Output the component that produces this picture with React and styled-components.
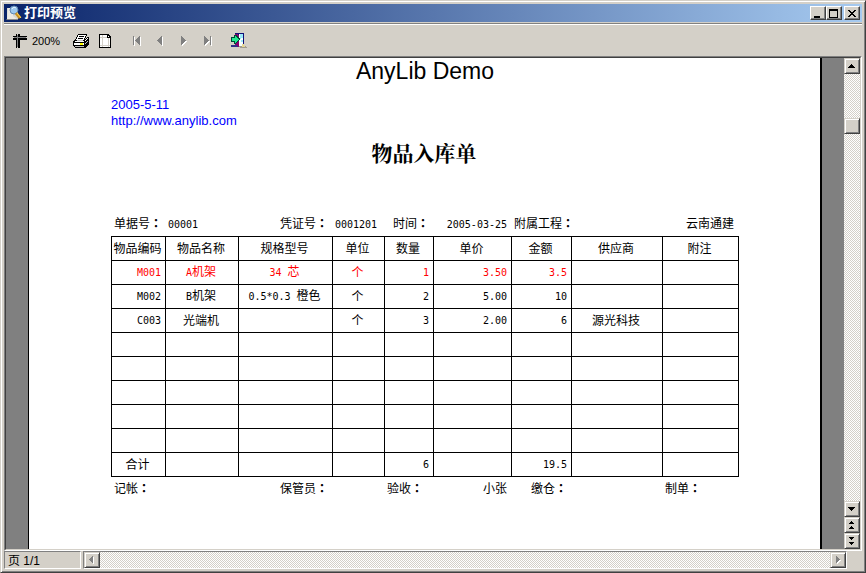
import React from 'react';
import styled, { createGlobalStyle } from 'styled-components';

const GlobalStyle = createGlobalStyle`
  * {
    box-sizing: border-box;
  }

  body {
    margin: 0;
    background: #d4d0c8;
    font-family: 'Liberation Sans', 'Noto Sans CJK SC', sans-serif;
    font-size: 12px;
    color: #000000;
  }

  button {
    margin: 0;
    padding: 0;
    border: none;
    background: transparent;
    color: inherit;
    font: inherit;
  }

  svg {
    display: block;
    flex-shrink: 0;
  }
`;

const Window = styled.div`
  display: flex;
  flex-direction: column;
  height: 100vh;
  padding: 3px;
  background: #d4d0c8;
  border: 1px solid;
  border-color: #d4d0c8 #404040 #404040 #d4d0c8;
  box-shadow: inset 1px 1px #ffffff, inset -1px -1px #808080;
`;

const TitleBar = styled.header`
  display: flex;
  align-items: center;
  height: 18px;
  flex-shrink: 0;
  padding: 0 2px;
  background: linear-gradient(to right, #0a246a, #a6caf0);
`;

const TitleText = styled.h1`
  flex: 1;
  margin: 0 0 0 2px;
  color: #ffffff;
  font-size: 13px;
  line-height: 18px;
  font-weight: 700;
`;

const WindowButton = styled.button`
  display: flex;
  align-items: center;
  justify-content: center;
  width: 16px;
  height: 14px;
  margin-left: ${(props) => (props.$spaced ? '2px' : '0')};
  background: #d4d0c8;
  border: 1px solid;
  border-color: #ffffff #404040 #404040 #ffffff;
  box-shadow: inset -1px -1px #808080;
`;

const Toolbar = styled.div`
  display: flex;
  align-items: center;
  gap: 12px;
  height: 33px;
  flex-shrink: 0;
  margin-top: 1px;
  padding: 1px 8px 0;
  border-top: 1px solid #808080;
  box-shadow: inset 0 1px #ffffff;
`;

const ToolGroup = styled.div`
  display: flex;
  align-items: center;
  gap: ${(props) => props.$gap || '0'};
`;

const ToolButton = styled.button`
  display: flex;
  align-items: center;
  justify-content: center;
  gap: 4px;
  min-width: ${(props) => props.$width || 'auto'};
`;

const ZoomLabel = styled.span`
  width: 28px;
  font-size: 11px;
  line-height: 16px;
`;

const Client = styled.main`
  display: flex;
  flex: 1;
  min-height: 0;
  border: 1px solid;
  border-color: #808080 #ffffff #ffffff #808080;
`;

const ClientInner = styled.div`
  display: flex;
  flex: 1;
  min-width: 0;
  border: 1px solid;
  border-color: #404040 #d4d0c8 #d4d0c8 #404040;
`;

const Viewport = styled.div`
  display: flex;
  flex: 1;
  min-width: 0;
  padding: 0 22px;
  background: #808080;
  overflow: hidden;
`;

const Page = styled.article`
  flex: 1;
  min-width: 0;
  padding: 0 81px 0 82px;
  background: #ffffff;
  border-left: 1px solid #000000;
  border-right: 2px solid #000000;
`;

const ReportHeader = styled.h2`
  margin: 0;
  font-family: 'Liberation Sans', sans-serif;
  font-size: 23px;
  line-height: 26px;
  font-weight: 400;
  text-align: center;
`;

const Meta = styled.div`
  margin-top: 13px;
  color: #0000ff;
  font-size: 13px;
  line-height: 16px;
`;

const SiteLink = styled.a`
  display: block;
  color: inherit;
  text-decoration: none;
`;

const ReportTitle = styled.h3`
  margin: 11px 0 48px;
  padding-right: 2px;
  font-family: 'Noto Serif CJK SC', 'Noto Sans CJK SC', serif;
  font-size: 21px;
  line-height: 24px;
  font-weight: 700;
  text-align: center;
`;

const FieldRow = styled.div`
  display: grid;
  grid-template-columns: 54fr 73fr 94fr 52fr 49fr 78fr 60fr 91fr 76fr;
  height: 24px;
  padding-left: 1px;
  line-height: 24px;
`;

const Field = styled.span`
  grid-column: ${(props) => props.$col};
  min-width: 0;
  padding: ${(props) => (props.$right ? '0 5px 0 0' : '0 0 0 2px')};
  text-align: ${(props) => (props.$right ? 'right' : 'left')};
  white-space: nowrap;
`;

const Sheet = styled.table`
  width: 100%;
  table-layout: fixed;
  border-collapse: separate;
  border-spacing: 0;
  border: solid #000000;
  border-width: 1px 0 0 1px;
`;

const Row = styled.tr`
  height: 24px;
  color: ${(props) => (props.$highlight ? '#ff0000' : 'inherit')};
`;

const cell = `
  height: 24px;
  line-height: 20px;
  border: solid #000000;
  border-width: 0 1px 1px 0;
  font-weight: 400;
  white-space: nowrap;
`;

const HeadCell = styled.th`
  ${cell}
  padding: 0 2px 0 0;
`;

const Cell = styled.td`
  ${cell}
  padding: ${(props) => (props.$align === 'right' ? '0 4px 0 0' : '0 2px 0 0')};
  text-align: ${(props) => props.$align};
`;

const Latin = styled.span`
  font-family: 'DejaVu Sans Mono', 'Liberation Mono', monospace;
  font-size: 10px;
`;

const Colon = styled.span`
  font-family: 'Noto Sans CJK JP', sans-serif;
  font-weight: 700;
  line-height: 0;
`;

const ScrollBar = styled.div`
  display: flex;
  flex-direction: ${(props) => (props.$horizontal ? 'row' : 'column')};
  flex: ${(props) => (props.$horizontal ? '1' : '0 0 16px')};
  background: repeating-conic-gradient(#ffffff 0 25%, #d4d0c8 0 50%) 0 0 / 2px 2px;
`;

const ScrollButton = styled.button`
  display: flex;
  align-items: center;
  justify-content: center;
  width: 16px;
  height: 16px;
  flex-shrink: 0;
  background: #d4d0c8;
  border: 1px solid;
  border-color: #d4d0c8 #404040 #404040 #d4d0c8;
  box-shadow: inset 1px 1px #ffffff, inset -1px -1px #808080;
`;

const Track = styled.div`
  flex: ${(props) => props.$grow};
`;

const StatusBar = styled.footer`
  display: flex;
  gap: 2px;
  height: 18px;
  flex-shrink: 0;
  padding-right: 15px;
`;

const StatusPanel = styled.div`
  width: 77px;
  padding: 0 3px;
  line-height: 18px;
  border: 1px solid;
  border-color: #808080 #ffffff #ffffff #808080;
`;

const ScrollFrame = styled.div`
  display: flex;
  flex: 1;
  border: 1px solid;
  border-color: #808080 #ffffff #ffffff #808080;
`;

const PreviewIcon = () => (
  <svg width="16" height="16" viewBox="0 0 16 16">
    <path d="M1 3h8l3 3v8H1z" fill="#d8d8d0" />
    <path d="M1 14l1-11h5v8l4 3z" fill="#eceae4" />
    <path d="M0 14h12v1H1z" fill="#8c8c8c" />
    <circle cx="8" cy="5" r="4" fill="#9cc8ee" stroke="#6088b4" strokeWidth="1" />
    <path d="M6 4c1-2 3-2 4-1" stroke="#e4f4ff" fill="none" />
    <path d="M10 8l4 5" stroke="#c89020" strokeWidth="3" />
    <path d="M11 8l4 5" stroke="#ffd860" strokeWidth="1" />
  </svg>
);

const RulerIcon = () => (
  <svg width="16" height="16" viewBox="0 0 16 16" shapeRendering="crispEdges">
    <path d="M1 3h14v1H1zM1 5h14v2H1zM4 1h1v14H4zM6 1h2v14H6z" fill="#000000" />
    <path d="M2 4h12v1H2zM5 2h1v12H5z" fill="#808080" />
  </svg>
);

const PrinterIcon = () => (
  <svg width="18" height="16" viewBox="0 0 18 16" shapeRendering="crispEdges">
    <path d="M6 1h8l-1 6H3z" fill="#ffffff" />
    <path
      d="M6 1h9v1H6zM5 2h1v2H5zM14 2h1v1h-1zM13 3h1v2h-1zM4 4h1v2H4zM7 3h5v1H7zM6 5h5v1H6zM3 6h1v1H3zM12 5h1v2h-1z"
      fill="#000000"
    />
    <path d="M2 7h10l3-3h1l1 1v6l-4 4H3l-2-2V8z" fill="#000000" />
    <path d="M3 8h9v1H3zM2 10h10v2H2zM13 7h1v1h-1zM14 6h1v1h-1zM15 5h1v1h-1z" fill="#ffffff" />
    <path d="M13 10h1v1h-1zM14 9h1v1h-1zM15 8h1v1h-1zM3 13h9v1H3zM5 7h6v1H5z" fill="#c0c0c0" />
    <path d="M8 10h3v2H8z" fill="#ffff00" />
  </svg>
);

const PageIcon = () => (
  <svg width="16" height="16" viewBox="0 0 16 16" shapeRendering="crispEdges">
    <path d="M1 1h9l3 3v11H1z" fill="#000000" />
    <path d="M2 2h7v3h3v9H2z" fill="#ffffff" />
    <path d="M10 3h1v1h-1z" fill="#ffffff" />
    <path d="M4 2h1v12H4zM2 4h7v1H2zM2 12h10v1H2zM10 5h1v9h-1z" fill="#d4d0c8" />
  </svg>
);

const navShapes = {
  first: 'M1 1h1v9H1zM8 1v9l-5-4v-1z',
  prev: 'M7 1v9l-5-4v-1z',
  next: 'M3 1v9l5-4v-1z',
  last: 'M9 1h1v9H9zM3 1v9l5-4v-1z',
};

const NavIcon = ({ type }) => (
  <svg width="11" height="12" viewBox="0 0 11 12" shapeRendering="crispEdges">
    <path d={navShapes[type]} fill="#ffffff" transform="translate(1 1)" />
    <path d={navShapes[type]} fill="#808080" />
  </svg>
);

const ExitIcon = () => (
  <svg width="18" height="16" viewBox="0 0 18 16" shapeRendering="crispEdges">
    <path d="M5 0h9v13H5z" fill="#101078" />
    <path d="M9 1h4v12H9z" fill="#f4ffff" />
    <path d="M10 1h3v4h-2v1h-1zM11 7h2v2h-2z" fill="#9ce8f8" />
    <path d="M5 1h3l1 2v11l-4-2z" fill="#880070" />
    <path d="M1 4h3V2h2l4 4-4 5H4V9H1z" fill="#004838" />
    <path d="M2 5h3V3l4 3-4 4V8H2z" fill="#20e890" />
    <path d="M1 12h5l3 2H1z" fill="#303088" />
    <path d="M9 13h6l3 2h-8z" fill="#a09c90" />
    <path d="M12 11h2v2h1v1h-3z" fill="#e8d890" />
  </svg>
);

const arrowShapes = {
  up: 'M4 3h1v1H4zM3 4h3v1H3zM2 5h5v1H2zM1 6h7v1H1z',
  down: 'M1 3h7v1H1zM2 4h5v1H2zM3 5h3v1H3zM4 6h1v1H4z',
  left: 'M5 1h1v7H5zM4 2h1v5H4zM3 3h1v3H3zM2 4h1v1H2z',
  right: 'M3 1h1v7H3zM4 2h1v5H4zM5 3h1v3H5zM6 4h1v1H6z',
  pageUp: 'M4 1h1v1H4zM3 2h3v1H3zM2 3h5v1H2zM4 6h1v1H4zM3 7h3v1H3zM2 8h5v1H2z',
  pageDown: 'M2 1h5v1H2zM3 2h3v1H3zM4 3h1v1H4zM2 6h5v1H2zM3 7h3v1H3zM4 8h1v1H4z',
};

const Arrow = ({ type, disabled }) => (
  <svg width="10" height="10" viewBox="0 0 10 10" shapeRendering="crispEdges">
    {disabled && <path d={arrowShapes[type]} fill="#ffffff" transform="translate(1 1)" />}
    <path d={arrowShapes[type]} fill={disabled ? '#808080' : '#000000'} />
  </svg>
);

const windowShapes = {
  min: 'M1 7h6v2H1z',
  max: 'M0 0h9v9H0zM1 2v6h7V2z',
  close: 'M1 1h2v1h1v1h2V2h1V1h2v1H8v1H7v1H6v1h1v1h1v1h1v1H7V7H6V6H4v1H3v1H1V7h1V6h1V5h1V4H3V3H2V2H1z',
};

const WindowIcon = ({ type }) => (
  <svg width="10" height="9" viewBox="0 0 10 9" shapeRendering="crispEdges">
    <path d={windowShapes[type]} fill="#000000" fillRule="evenodd" />
  </svg>
);

const columns = [
  { key: 'code', title: '物品编码', width: 54, align: 'right' },
  { key: 'name', title: '物品名称', width: 73, align: 'center' },
  { key: 'spec', title: '规格型号', width: 94, align: 'center' },
  { key: 'unit', title: '单位', width: 52, align: 'center' },
  { key: 'count', title: '数量', width: 49, align: 'right' },
  { key: 'price', title: '单价', width: 78, align: 'right' },
  { key: 'amount', title: '金额', width: 60, align: 'right' },
  { key: 'supplier', title: '供应商', width: 91, align: 'center' },
  { key: 'note', title: '附注', width: 76, align: 'center' },
];

const items = [
  { code: 'M001', name: 'A机架', spec: '34 芯', unit: '个', count: '1', price: '3.50', amount: '3.5' },
  { code: 'M002', name: 'B机架', spec: '0.5*0.3 橙色', unit: '个', count: '2', price: '5.00', amount: '10' },
  { code: 'C003', name: '光端机', unit: '个', count: '3', price: '2.00', amount: '6', supplier: '源光科技' },
  {},
  {},
  {},
  {},
  {},
];

const total = { count: '6', amount: '19.5' };

const headFields = [
  { col: 1, text: '单据号：' },
  { col: 2, text: '00001' },
  { col: 3, text: '凭证号：', right: true },
  { col: 4, text: '0001201' },
  { col: 5, text: '时间：', right: true },
  { col: 6, text: '2005-03-25', right: true },
  { col: 7, text: '附属工程：' },
  { col: 9, text: '云南通建', right: true },
];

const footFields = [
  { col: 1, text: '记帐：' },
  { col: 3, text: '保管员：', right: true },
  { col: 5, text: '验收：' },
  { col: 6, text: '小张', right: true },
  { col: 7, text: '缴仓：', right: true },
  { col: 9, text: '制单：' },
];

// half-width runs get the monospaced face, full-width colons the centred one
const MixedText = ({ text = '' }) =>
  text
    .split(/([\x20-\x7e]+|：)/)
    .filter(Boolean)
    .map((part, i) => {
      if (part === '：') return <Colon key={i}>{part}</Colon>;
      return /^[\x20-\x7e]/.test(part) ? <Latin key={i}>{part}</Latin> : part;
    });

const Fields = ({ fields }) => (
  <FieldRow>
    {fields.map((field) => (
      <Field key={field.text} $col={field.col} $right={field.right}>
        <MixedText text={field.text} />
      </Field>
    ))}
  </FieldRow>
);

const ReportTable = () => (
  <Sheet>
    <colgroup>
      {columns.map((column) => (
        <col key={column.key} width={column.width} />
      ))}
    </colgroup>
    <thead>
      <Row>
        {columns.map((column) => (
          <HeadCell key={column.key} scope="col">
            {column.title}
          </HeadCell>
        ))}
      </Row>
    </thead>
    <tbody>
      {items.map((item, i) => (
        <Row key={i} $highlight={i === 0}>
          {columns.map((column) => (
            <Cell key={column.key} $align={column.align}>
              <MixedText text={item[column.key]} />
            </Cell>
          ))}
        </Row>
      ))}
    </tbody>
    <tfoot>
      <Row>
        <HeadCell scope="row">合计</HeadCell>
        {columns.slice(1).map((column) => (
          <Cell key={column.key} $align={column.align}>
            <MixedText text={total[column.key]} />
          </Cell>
        ))}
      </Row>
    </tfoot>
  </Sheet>
);

const App = () => (
  <Window>
    <GlobalStyle />
    <TitleBar>
      <PreviewIcon />
      <TitleText>打印预览</TitleText>
      <WindowButton aria-label="最小化">
        <WindowIcon type="min" />
      </WindowButton>
      <WindowButton aria-label="最大化">
        <WindowIcon type="max" />
      </WindowButton>
      <WindowButton aria-label="关闭" $spaced>
        <WindowIcon type="close" />
      </WindowButton>
    </TitleBar>

    <Toolbar>
      <ToolButton>
        <RulerIcon />
        <ZoomLabel>200%</ZoomLabel>
      </ToolButton>
      <ToolGroup $gap="8px">
        <ToolButton aria-label="打印">
          <PrinterIcon />
        </ToolButton>
        <ToolButton aria-label="页面设置">
          <PageIcon />
        </ToolButton>
      </ToolGroup>
      <ToolGroup>
        <ToolButton $width="23px" aria-label="首页" disabled>
          <NavIcon type="first" />
        </ToolButton>
        <ToolButton $width="23px" aria-label="上一页" disabled>
          <NavIcon type="prev" />
        </ToolButton>
        <ToolButton $width="23px" aria-label="下一页" disabled>
          <NavIcon type="next" />
        </ToolButton>
        <ToolButton $width="23px" aria-label="末页" disabled>
          <NavIcon type="last" />
        </ToolButton>
      </ToolGroup>
      <ToolButton aria-label="退出">
        <ExitIcon />
      </ToolButton>
    </Toolbar>

    <Client>
      <ClientInner>
        <Viewport>
          <Page>
            <ReportHeader>AnyLib Demo</ReportHeader>
            <Meta>
              2005-5-11
              <SiteLink href="http://www.anylib.com">http://www.anylib.com</SiteLink>
            </Meta>
            <ReportTitle>物品入库单</ReportTitle>
            <Fields fields={headFields} />
            <ReportTable />
            <Fields fields={footFields} />
          </Page>
        </Viewport>
        <ScrollBar>
          <ScrollButton aria-label="向上滚动">
            <Arrow type="up" />
          </ScrollButton>
          <Track $grow={44} />
          <ScrollButton aria-label="滚动块" />
          <Track $grow={366} />
          <ScrollButton aria-label="向下滚动">
            <Arrow type="down" />
          </ScrollButton>
          <ScrollButton aria-label="前一页">
            <Arrow type="pageUp" />
          </ScrollButton>
          <ScrollButton aria-label="后一页">
            <Arrow type="pageDown" />
          </ScrollButton>
        </ScrollBar>
      </ClientInner>
    </Client>

    <StatusBar>
      <StatusPanel>页 1/1</StatusPanel>
      <ScrollFrame>
        <ScrollBar $horizontal>
          <ScrollButton aria-label="向左滚动" disabled>
            <Arrow type="left" disabled />
          </ScrollButton>
          <Track $grow={1} />
          <ScrollButton aria-label="向右滚动" disabled>
            <Arrow type="right" disabled />
          </ScrollButton>
        </ScrollBar>
      </ScrollFrame>
    </StatusBar>
  </Window>
);

export default App;
